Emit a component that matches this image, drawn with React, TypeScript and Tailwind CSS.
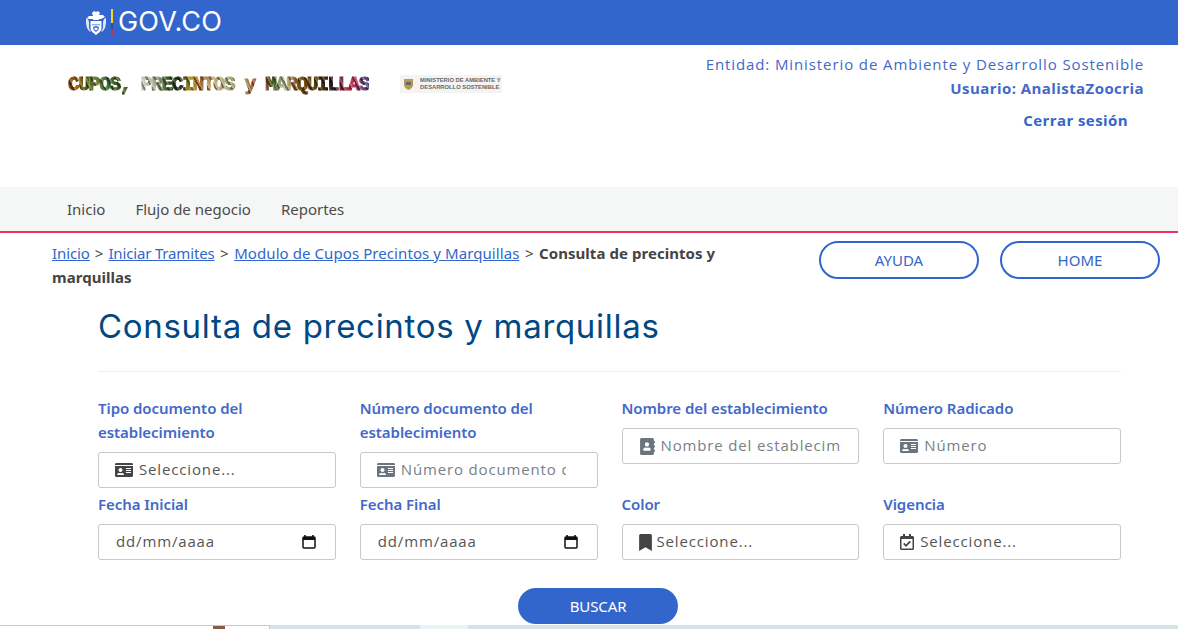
import React from "react";
import { FaIdCard, FaAddressBook, FaBookmark, FaRegCalendarCheck } from "react-icons/fa";

const Shield = () => (
  <svg width="22" height="26" viewBox="0 0 22 26" fill="#fff">
    <path d="M7 3l2-2 2 1 2-1 2 2-1 2h4l2 2-2 1-2 1h-2v1H8v-1H6L4 9 2 8l2-2h4z" />
    <path d="M1 8l2 1 1 3v6l2 4-2-1-2-3-1-5zM21 8l-2 1-1 3v6l-2 4 2-1 2-3 1-5z" opacity="0.85" />
    <path d="M5.500 11h11v7c0 3-3 5-5.500 7-2.500-2-5.500-4-5.500-7z" />
    <path d="M6.800 14.500h8.400v.8H6.800zM8 17l3-1 3 1-.6 3-2.400 2-2.400-2z" fill="#3366cc" />
    <path d="M9.500 17.800h3v1.600l-1.500 1-1.500-1z" />
  </svg>
);

const CalIcon = () => (
  <svg width="14" height="14" viewBox="0 0 14 14" className="shrink-0">
    <path d="M3 0v2M11 0v2" stroke="#000" strokeWidth="1.500" />
    <rect x="1" y="2" width="12" height="11" rx="1" fill="none" stroke="#111" strokeWidth="1.500" />
    <rect x="1" y="2" width="12" height="3" fill="#111" />
  </svg>
);

const Label = ({ children }: { children: React.ReactNode }) => (
  <label className="block text-[15px] leading-6 font-semibold text-[#4269c9] mb-2 font-['Noto_Sans',sans-serif] tracking-[-0.06px]">{children}</label>
);

const Field = ({ label, icon, text, muted, pr, gap }: { label: React.ReactNode; icon: React.ReactNode; text: string; muted?: boolean; pr: string; gap: string }) => (
  <div>
    <Label>{label}</Label>
    <div className={`h-9 rounded-[3px] border border-[#c8c8c8] bg-white flex items-center pl-4 text-[15px] overflow-hidden whitespace-nowrap font-['Open_Sans',sans-serif] ${pr}`}>
      <span className={`shrink-0 ${gap} ${muted ? "text-[#6c757d]" : "text-[#444444]"}`}>{icon}</span>
      <span className={`overflow-hidden -mt-[2px] tracking-[0.85px] ${muted ? "text-[#7a7f85]" : "text-[#555555]"}`}>{text}</span>
    </div>
  </div>
);

const DateField = ({ label }: { label: string }) => (
  <div>
    <Label>{label}</Label>
    <div className="h-9 rounded-[3px] border border-[#c8c8c8] bg-white flex items-center justify-between pl-[17px] pr-[19px] text-[15px] text-[#555555] tracking-[0.85px] font-['Open_Sans',sans-serif]">
      <span className="-mt-[2px]">dd/mm/aaaa</span>
      <CalIcon />
    </div>
  </div>
);

const Pill = ({ children }: { children: React.ReactNode }) => (
  <button className="h-[38px] w-40 rounded-full border-2 border-[#3366cc] bg-white text-[15px] text-[#3366cc] font-['Noto_Sans',sans-serif]">{children}</button>
);

export default function App() {
  return (
    <div className="w-[1178px] h-[629px] overflow-hidden bg-white flex flex-col font-['Noto_Sans',sans-serif]">
      <div className="h-[45px] shrink-0 bg-[#3366cc] flex items-center pl-[85px]">
        <Shield />
        <div className="ml-[4px] w-[2px] h-[27px] flex flex-col">
          <div className="flex-1 bg-[#f5d327]" />
          <div className="h-[6px] bg-[#2251a8]" />
          <div className="h-[7px] bg-[#cf2b4b]" />
        </div>
        <span className="ml-[5px] text-white text-[27px] font-['Inter',sans-serif] tracking-[0.2px]">GOV.CO</span>
      </div>

      <div className="h-[142px] shrink-0 flex justify-between pl-[68px] pr-[34px]">
        <div className="flex items-start pt-[29px]">
          <span className="font-['Liberation_Mono',monospace] font-bold text-[19.500px] leading-[22px] tracking-[-1.320px] whitespace-nowrap bg-clip-text text-transparent [-webkit-text-stroke:1px_transparent] bg-[repeating-linear-gradient(62deg,rgba(0,0,0,0.38)_0px,rgba(0,0,0,0.38)_2px,rgba(255,255,255,0.2)_2px,rgba(255,255,255,0.2)_4px,transparent_4px,transparent_7px),linear-gradient(90deg,#6b3a0c_0%,#a8620f_3%,#4a5a14_6%,#6c7a30_10%,#3a6a3a_13%,#3f5a1c_16%,#5c6a34_21%,#c8c8b8_25%,#a8a890_29%,#3c5a20_33%,#1a2a1a_37%,#b89a20_41%,#a06030_44%,#c4a870_48%,#a6a878_53%,#8f9a50_58%,#c4352a_64%,#3c5a20_68%,#c8c8a0_72%,#7a4a12_76%,#5a3a0a_82%,#2a1a20_88%,#d03050_94%,#3c4a80_100%)]">CUPOS, PRECINTOS y MARQUILLAS</span>
          <div className="ml-[31px] mt-[1px] w-[102px] h-[18px] bg-[#f3f3f3] flex items-center pl-[3px] gap-[6px]">
            <svg width="11" height="13" viewBox="0 0 11 13"><path d="M1 1h9v6c0 2-2 4-4.500 5C3 11 1 9 1 7z" fill="#b89a4a" /><path d="M3 4h5v3H3z" fill="#5a6a7a" /></svg>
            <span className="font-['Liberation_Sans',sans-serif] font-bold text-[5.800px] leading-[7px] text-[#666666] whitespace-nowrap">MINISTERIO DE AMBIENTE Y<br />DESARROLLO SOSTENIBLE</span>
          </div>
        </div>
        <div className="flex flex-col items-end pt-[7px] font-['Open_Sans',sans-serif] text-[15px] text-[#4269c9]">
          <div className="leading-6 tracking-[0.9px]">Entidad: Ministerio de Ambiente y Desarrollo Sostenible</div>
          <div className="leading-6 font-bold tracking-[0.43px]">Usuario: AnalistaZoocria</div>
          <div className="leading-6 font-bold mt-[8px] mr-[16px] text-[#3366cc] tracking-[0.42px]">Cerrar sesión</div>
        </div>
      </div>

      <nav className="h-[46px] shrink-0 bg-[#f5f7f7] border-b-2 border-[#f42f63] flex items-center pl-[67px] gap-[30px] text-[15px] text-[#4b4b4b]">
        <span>Inicio</span>
        <span>Flujo de negocio</span>
        <span>Reportes</span>
      </nav>

      <div className="flex pl-[52px] pr-[18px] pt-[8px] h-[78px] shrink-0 justify-between">
        <div className="w-[700px] text-[15px] leading-6 text-[#444444] tracking-[0.03px]">
          <span className="text-[#3366cc] underline tracking-[-0.1px]">Inicio</span>
          <span className="mx-[5px]">&gt;</span>
          <span className="text-[#3366cc] underline tracking-[-0.16px]">Iniciar Tramites</span>
          <span className="mx-[5.500px]">&gt;</span>
          <span className="text-[#3366cc] underline tracking-[0.08px]">Modulo de Cupos Precintos y Marquillas</span>
          <span className="mx-[5.500px]">&gt;</span>
          <b className="font-bold tracking-[0.05px]">Consulta de precintos y marquillas</b>
        </div>
        <div className="flex gap-[21px]">
          <Pill>AYUDA</Pill>
          <Pill>HOME</Pill>
        </div>
      </div>

      <div className="ml-[98px] w-[1023px] flex-1 flex flex-col min-h-0">
        <h1 className="-mt-[5px] text-[33px] leading-[40px] text-[#004884] font-['Inter',sans-serif] tracking-[0.7px] whitespace-nowrap">Consulta de precintos y marquillas</h1>
        <hr className="mt-[25px] mb-[24px] border-[#eeeeee]" />
        <div className="grid grid-cols-4 gap-x-6 gap-y-1">
          <Field label={<>Tipo documento del<br />establecimiento</>} icon={<FaIdCard className="text-[18px]" />} text="Seleccione..." pr="pr-[32px]" gap="mr-[6px]" />
          <Field label={<>Número documento del<br />establecimiento</>} icon={<FaIdCard className="text-[18px]" />} text="Número documento del establecimiento" muted pr="pr-[31px]" gap="mr-[6px]" />
          <Field label="Nombre del establecimiento" icon={<FaAddressBook className="text-[17px]" />} text="Nombre del establecimiento" muted pr="pr-[16px]" gap="mr-[5px]" />
          <Field label="Número Radicado" icon={<FaIdCard className="text-[18px]" />} text="Número" muted pr="pr-[32px]" gap="mr-[6px]" />
          <DateField label="Fecha Inicial" />
          <DateField label="Fecha Final" />
          <Field label="Color" icon={<FaBookmark className="text-[17px]" />} text="Seleccione..." pr="pr-[32px]" gap="-ml-[2px] mr-[3px]" />
          <Field label="Vigencia" icon={<FaRegCalendarCheck className="text-[16px]" />} text="Seleccione..." pr="pr-[32px]" gap="-ml-[1px] mr-[5px]" />
        </div>
        <div className="flex justify-center mt-[28px] mr-[23px]">
          <button className="h-9 w-40 rounded-full bg-[#3366cc] text-white text-[15px] tracking-[-0.1px]">BUSCAR</button>
        </div>
      </div>

      <div className="h-[4px] shrink-0 flex">
        <div className="w-[270px] bg-white border-t border-r border-[#c8c8c8] pl-[213px]">
          <div className="w-[12px] h-[3px] bg-[#8a5a44]" />
        </div>
        <div className="w-[150px] bg-[#d5e3e9]" />
        <div className="w-[48px] bg-[#e9f2f5]" />
        <div className="flex-1 bg-[#d5e3e9]" />
      </div>
    </div>
  );
}
